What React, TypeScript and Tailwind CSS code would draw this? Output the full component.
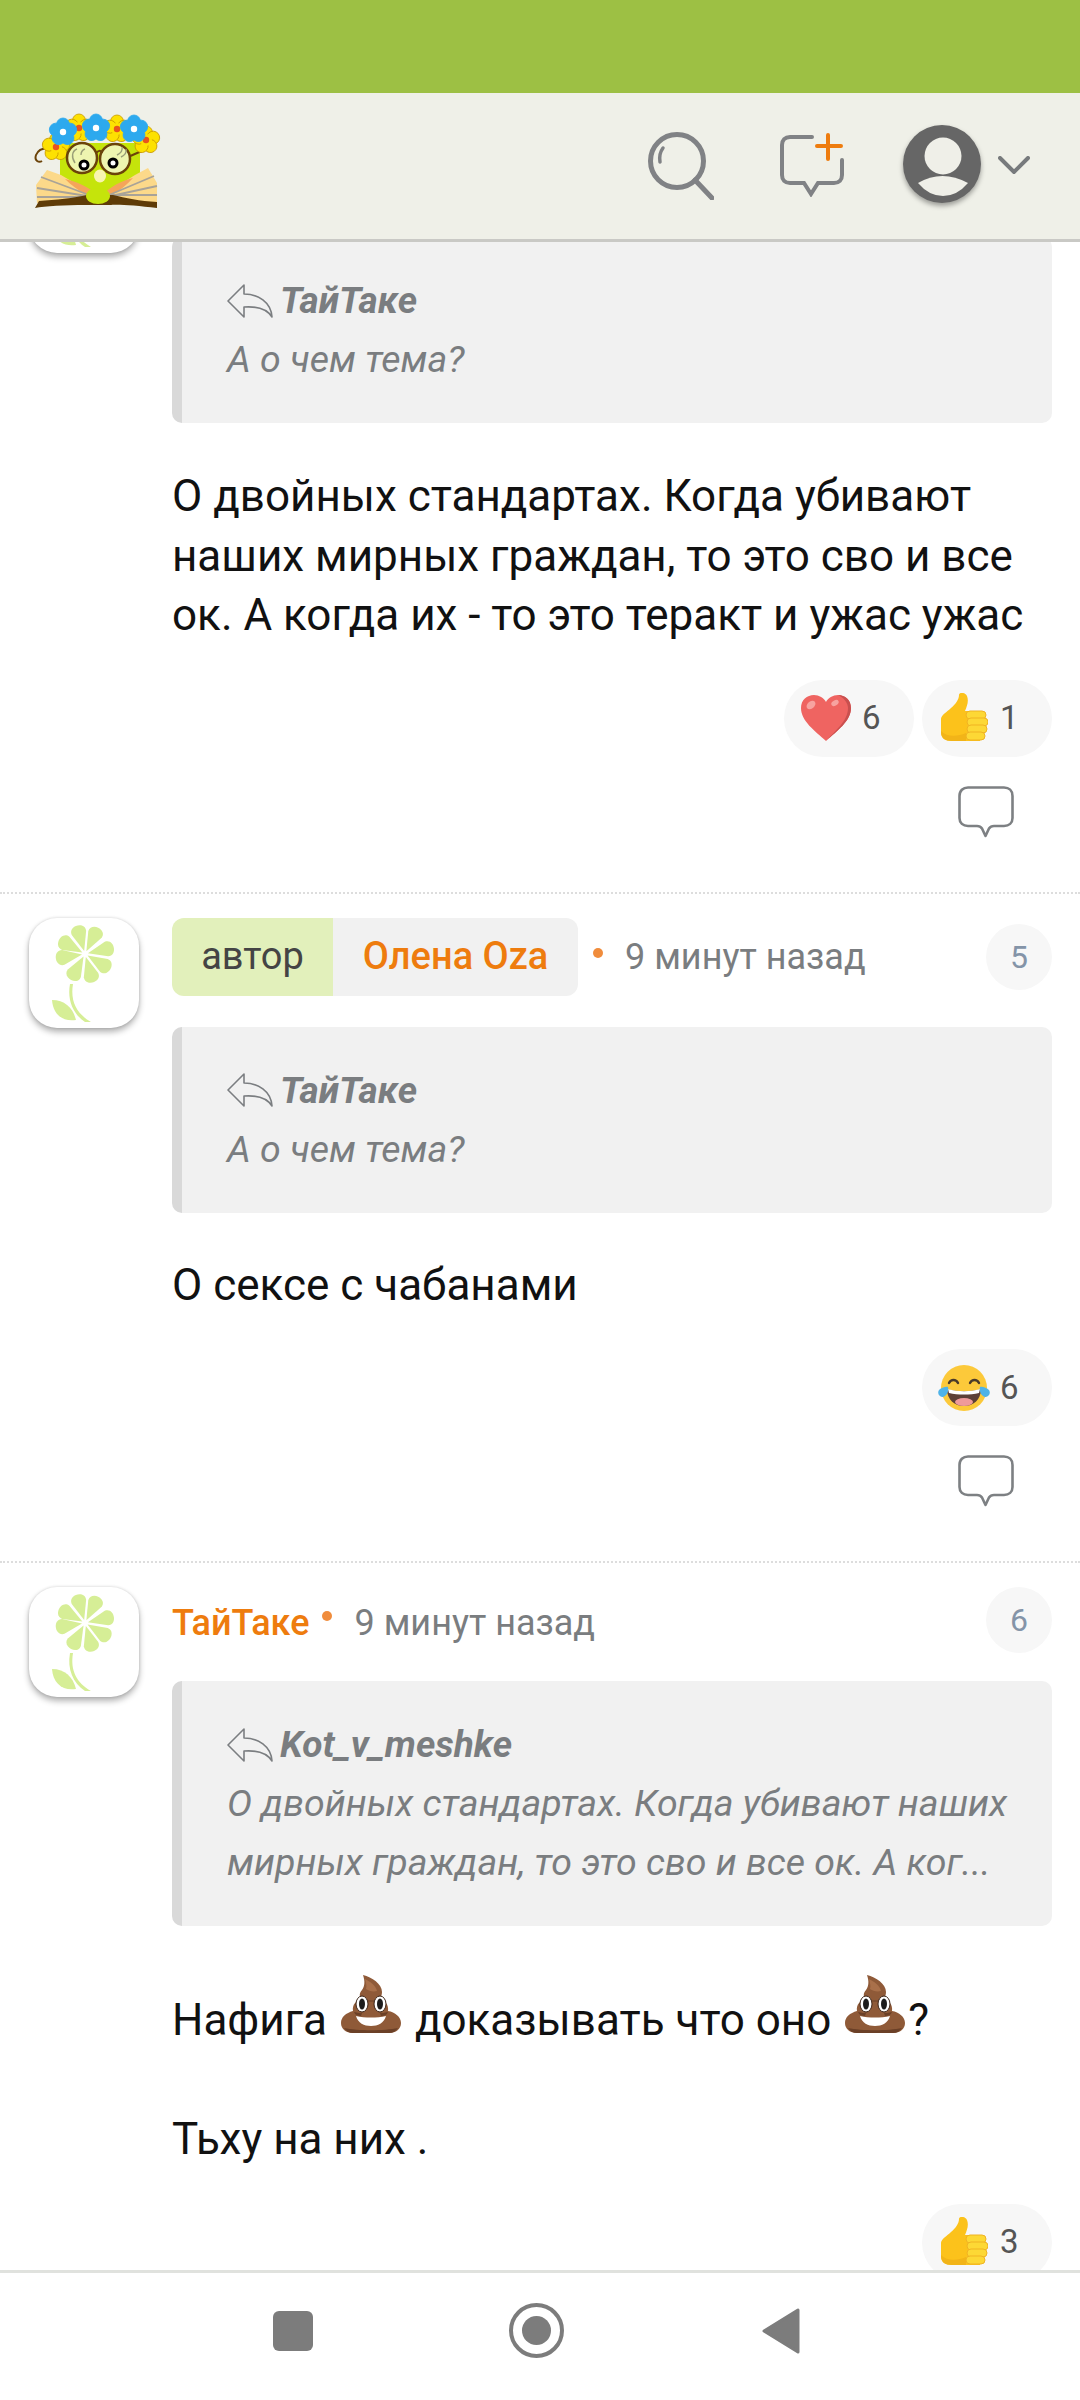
import React from 'react';

const Heart = () => (
  <svg viewBox="0 0 50 46" className="w-[50px] h-[46px]">
    <path d="M25 46C14 36 0 26 0 13 0 5 6 0 13 0c5 0 10 3 12 7 2-4 7-7 12-7 7 0 13 5 13 13 0 13-14 23-25 33z" fill="#ef6461" />
    <path d="M37 0c7 0 13 5 13 13 0 13-14 23-25 33 9-10 22-20 22-33 0-5-4-10-10-13z" fill="#c9504f" />
    <ellipse cx="10" cy="10" rx="5" ry="3.500" transform="rotate(-40 10 10)" fill="#f7a3a0" />
    <ellipse cx="34" cy="8" rx="4" ry="2.500" transform="rotate(-30 34 8)" fill="#f7a3a0" />
  </svg>
);

const Thumb = () => (
  <svg viewBox="0 0 48 50" className="w-[48px] h-[50px]">
    <path d="M1 26c0-4 6-7 10-11 5-4 8-9 8-13 0-3 6-3 8 1 2 5 0 10-2 15h15v30H12C5 48 1 45 1 40z" fill="#fcc21b" />
    <path d="M1 38c6 6 16 6 25 2v8H12C5 48 1 45 1 38z" fill="#f2b418" />
    <rect x="26" y="18" width="20" height="8" rx="4" fill="#fdd835" stroke="#f0b323" />
    <rect x="27" y="25" width="21" height="8" rx="4" fill="#fdd835" stroke="#f0b323" />
    <rect x="27" y="32" width="20" height="8" rx="4" fill="#fdd835" stroke="#f0b323" />
    <rect x="26" y="39" width="19" height="8" rx="4" fill="#fdd835" stroke="#f0b323" />
  </svg>
);

const Joy = () => (
  <svg viewBox="0 0 52 46" className="w-[52px] h-[46px]">
    <circle cx="26" cy="23" r="23" fill="#fcc93a" />
    <path d="M11 18c2-4 7-4 9 0M32 18c2-4 7-4 9 0" fill="none" stroke="#4a3a2a" strokeWidth="2.400" strokeLinecap="round" />
    <path d="M9 24c10 3 24 3 34 0 0 11-8 17-17 17S9 35 9 24z" fill="#5d4037" />
    <path d="M10 24c10 3 22 3 32 0l-1 4c-9 2-21 2-30 0z" fill="#fff" />
    <ellipse cx="26" cy="37" rx="9" ry="4" fill="#ef9a9a" />
    <path d="M1 25c2-2 7-4 9-3 1 4-1 9-5 10-4 0-6-4-4-7zM51 25c-2-2-7-4-9-3-1 4 1 9 5 10 4 0 6-4 4-7z" fill="#4fb3e8" />
  </svg>
);

const Poop = () => (
  <svg viewBox="0 0 60 58" className="inline-block w-[60px] h-[60px] -my-[26px] mx-[3px] align-[27px]">
    <path d="M22 0c9 2 19 9 19 17 0 3-1 5-3 7 6 1 10 6 9 12 7 1 13 6 13 12 0 6-5 10-12 10H12C5 58 0 54 0 48c0-6 5-10 12-12-1-6 3-11 9-12-3-2-3-6 0-9 3-4 3-9 1-15z" fill="#8f5a38" />
    <path d="M3 53c14 3 40 3 54 0-2 3-5 5-9 5H12c-4 0-7-2-9-5zM13 37c4 1 6 1 8 1l-1 3c-3 0-6-1-7-4zM47 37c-4 1-6 1-8 1l1 3c3 0 6-1 7-4zM21 24c6 2 12 2 17 0l-2 2c-5 1-10 1-15-2z" fill="#6b4027" />
    <path d="M24 4c6 3 11 7 12 12-4 1-8 0-11-2 1-3 0-6-1-10z" fill="#a9704a" />
    <ellipse cx="21" cy="29" rx="6" ry="8" fill="#fff" stroke="#3b2417" />
    <ellipse cx="39" cy="29" rx="6" ry="8" fill="#fff" stroke="#3b2417" />
    <ellipse cx="21" cy="29" rx="3" ry="5.500" fill="#1c1c1c" />
    <ellipse cx="39" cy="29" rx="3" ry="5.500" fill="#1c1c1c" />
    <path d="M15 41c9 2 21 2 30 0-2 7-8 10-15 10s-13-3-15-10z" fill="#fff" />
  </svg>
);

const Flower = () => (
  <svg viewBox="0 0 110 110" className="w-[110px] h-[110px]">
    {[-16, 27, 77, 121, 164, 209, 261, 299].map((a) => (
      <path key={a} d="M0 -3L-7.500 -22C-9 -32 9 -32 7.500 -22z" transform={`translate(56 36) rotate(${a})`} fill="#d6ee96" />
    ))}
    <path d="M44 66C41 84 48 96 62 104L56 104C44 96 38 82 41 66z" fill="#d6ee96" />
    <path d="M23 82C36 82 44 90 47 102 33 104 24 96 23 82z" fill="#d6ee96" />
  </svg>
);

const WreathFlower = ({ x, y, color, core, edge }: { x: number; y: number; color: string; core: string; edge: string }) => (
  <g transform={`translate(${x} ${y})`}>
    {[0, 72, 144, 216, 288].map((a) => (
      <circle key={a} cx="0" cy="-7.500" r="6.500" transform={`rotate(${a})`} fill={color} stroke={edge} strokeWidth="0.800" />
    ))}
    <circle r="6" fill={color} />
    <circle r="3.200" fill={core} />
  </g>
);

const Logo = () => (
  <svg viewBox="0 0 145 110" className="w-[145px] h-[110px] -mt-[12px]">
    <path d="M35 38h80v42l-30 12H62L35 80z" fill="#c5e40b" />
    <path d="M42 50C30 42 15 40 11 50 9 56 14 58 17 56" fill="none" stroke="#6b4309" strokeWidth="2" />
    <path d="M103 52l16-7" stroke="#6b4309" strokeWidth="2" />
    <WreathFlower x={31} y={42} color="#fde101" core="#e8531d" edge="#c99a00" />
    <WreathFlower x={54} y={23} color="#fde101" core="#e8531d" edge="#c99a00" />
    <WreathFlower x={92} y={24} color="#fde101" core="#e8531d" edge="#c99a00" />
    <WreathFlower x={121} y={35} color="#fde101" core="#e8531d" edge="#c99a00" />
    <WreathFlower x={38} y={27} color="#2da9ee" core="#ffffff" edge="#2da9ee" />
    <WreathFlower x={71} y={23} color="#2da9ee" core="#ffffff" edge="#2da9ee" />
    <WreathFlower x={109} y={24} color="#2da9ee" core="#ffffff" edge="#2da9ee" />
    <circle cx="57" cy="53" r="15" fill="#eef5b0" stroke="#6b4309" strokeWidth="2.500" />
    <circle cx="90" cy="54" r="15" fill="#eef5b0" stroke="#6b4309" strokeWidth="2.500" />
    <path d="M71 48c3-3 5-3 6 0" fill="none" stroke="#6b4309" strokeWidth="2" />
    <path d="M50 58c-4-6-3-12 2-14M56 50c0-3 1-5 4-6M92 50c4-2 6-4 5-8M96 52c4-2 6-4 5-8" fill="none" stroke="#9a9f78" strokeWidth="1.400" />
    <circle cx="59" cy="60" r="5.500" fill="#000" />
    <circle cx="88" cy="58" r="5.500" fill="#000" />
    <circle cx="59" cy="60" r="2.500" fill="#fff" />
    <circle cx="88" cy="58" r="2.500" fill="#fff" />
    <ellipse cx="75" cy="71" rx="6" ry="6.500" fill="#f8f4b0" />
    <path d="M22 65L36 70 70 90V98H12L11 80z" fill="#fcd98a" />
    <path d="M123 63L110 70 78 90V98H132V78z" fill="#fcd98a" />
    <path d="M40 74c10 2 24 8 33 16H62c-8-4-16-10-22-16zM108 73c-10 2-24 9-30 17h8c8-4 16-10 22-17z" fill="#f5a55a" />
    <path d="M16 72l48 18M12 83l50 8M12 92h50M129 71L84 90M132 81l-46 10M132 90H86" stroke="#a9a398" strokeWidth="1.800" />
    <path d="M10 103L14 96C30 95 50 93 62 90H88C100 93 115 96 132 97V103C110 100 90 99 85 100H60C40 100 20 101 10 103z" fill="#5e3b07" />
    <ellipse cx="73" cy="91" rx="12" ry="8" fill="#c5e40b" />
  </svg>
);

const SearchIcon = () => (
  <svg viewBox="0 0 66 68" className="w-[66px] h-[68px]" fill="none" stroke="#808285" strokeLinecap="round">
    <circle cx="29" cy="29" r="26.500" strokeWidth="5" />
    <path d="M47 48l17 18" strokeWidth="5" />
    <path d="M12 30c-1-6 0-10 3-14" strokeWidth="3.500" />
  </svg>
);

const NewCommentIcon = () => (
  <svg viewBox="0 0 64 64" className="w-[64px] h-[64px] -mt-[3px]" fill="none" strokeLinecap="round">
    <path d="M32 4H10C5 4 2 7 2 12v30c0 5 3 8 8 8h14l7 11 7-11h16c5 0 8-3 8-8V27" stroke="#808285" strokeWidth="4" />
    <path d="M48 2v24M37 13h24" stroke="#ee7c0e" strokeWidth="4" />
  </svg>
);

const UserAvatar = () => (
  <div className="w-[78px] h-[78px] -mt-[5px] rounded-full bg-[#666666] shadow-[0_3px_5px_rgba(0,0,0,0.35)] overflow-hidden">
    <svg viewBox="0 0 78 78" className="w-full h-full">
      <circle cx="40" cy="31" r="18.500" fill="#efefe8" />
      <path d="M15 58Q39 44 65 58 54 71 40 71 26 71 15 58z" fill="#efefe8" />
    </svg>
  </div>
);

const ReplyArrow = () => (
  <svg viewBox="0 0 46 34" className="w-[46px] h-[34px] shrink-0" fill="none" stroke="#7b7e81" strokeWidth="1.600" strokeLinejoin="round">
    <path d="M1 17L17 1v9c14 0 27 8 28 23-5-8-14-11-28-10v10z" />
  </svg>
);

const Bubble = () => (
  <svg viewBox="0 0 56 52" className="w-[56px] h-[52px]" fill="none" stroke="#7d8083" strokeWidth="2.600" strokeLinejoin="round">
    <path d="M10 1.500h36c5 0 8.500 3 8.500 8.500v22c0 5-3.500 8-8.500 8H36c-3 0-4 1-5 2.500L27.500 50 24 42.500C23 41 22 40 19 40H10c-5 0-8.500-3-8.500-8V10C1.500 4.500 5 1.500 10 1.500z" />
  </svg>
);

const Avatar = () => (
  <div className="w-[110px] h-[110px] shrink-0 rounded-[28px] bg-white shadow-[0_4px_6px_rgba(0,0,0,0.3),0_0_3px_rgba(0,0,0,0.15)]">
    <Flower />
  </div>
);

const Reaction = ({ icon, count }: { icon: React.ReactNode; count: number }) => (
  <div className="w-[130px] h-[77px] rounded-full bg-[#f7f7f7] flex items-center pl-[16px] gap-[10px] text-[33px] text-[#555555]">
    <div className="w-[52px] flex justify-center">{icon}</div>
    <span>{count}</span>
  </div>
);

const Quote = ({ author, lines }: { author: string; lines: string[] }) => (
  <div className="rounded-[10px] overflow-hidden bg-[#f1f1f1] border-l-[10px] border-[#d9d9d9] pl-[45px] pr-[20px] py-[34px] text-[37.500px] leading-[59px] italic text-[#7a7d80] whitespace-nowrap">
    <div className="flex items-center gap-[7px]">
      <ReplyArrow />
      <span className="font-bold text-[37px]">{author}</span>
    </div>
    {lines.map((l) => (
      <div key={l}>{l}</div>
    ))}
  </div>
);

const Meta = ({ time, num, badgeClass = '', dotClass = '-mt-[8px]' }: { time: string; num: number; badgeClass?: string; dotClass?: string }) => (
  <div className="flex items-center flex-1">
    <div className={`w-[10px] h-[10px] rounded-full bg-[#f08c3c] mr-[22px] ${dotClass}`} />
    <span className="text-[36px] text-[#7a7d80] flex-1">{time}</span>
    <div className={`w-[66px] h-[66px] rounded-full bg-[#f7f7f7] flex items-center justify-center text-[32px] text-[#8494a8] ${badgeClass}`}>{num}</div>
  </div>
);

const Comment = ({
  header,
  quote,
  body,
  reactions,
  bodyGap,
  showBubble = true,
}: {
  header: React.ReactNode;
  quote: React.ReactNode;
  body: React.ReactNode;
  reactions: React.ReactNode;
  bodyGap: string;
  showBubble?: boolean;
}) => (
  <div className="flex pl-[29px] pr-[28px] pt-[24px] pb-[54px] gap-[33px] border-b-2 border-dotted border-[#dddddd]">
    <Avatar />
    <div className="flex-1 min-w-0">
      {header}
      {quote}
      <div className={`${bodyGap} text-[44px] leading-[59.500px] text-[#111111] whitespace-nowrap`}>{body}</div>
      <div className="flex justify-end gap-[8px] mt-[34px]">{reactions}</div>
      {showBubble && (
        <div className="flex justify-end pr-[38px] mt-[29px]">
          <Bubble />
        </div>
      )}
    </div>
  </div>
);

const App: React.FC = () => {
  return (
    <div className="w-[1080px] h-[2400px] flex flex-col bg-white [font-family:Roboto,sans-serif]">
      <div className="h-[93px] bg-[#9dc044]" />

      <header className="h-[149px] shrink-0 bg-[#eff0e8] border-b-[3px] border-[#c9c9c5] flex items-center pl-[25px] pr-[50px]">
        <Logo />
        <div className="ml-auto flex items-center">
          <SearchIcon />
          <div className="ml-[66px]">
            <NewCommentIcon />
          </div>
          <div className="ml-[59px]">
            <UserAvatar />
          </div>
          <svg viewBox="0 0 32 18" className="w-[32px] h-[18px] ml-[17px] -mt-[3px]" fill="none" stroke="#777a7c" strokeWidth="4" strokeLinecap="round">
            <path d="M2 2l14 14L30 2" />
          </svg>
        </div>
      </header>

      <main className="flex-1 overflow-hidden">
        <div className="-mt-[123px]">
          <Comment
            header={<div className="h-[94px]" />}
            quote={<Quote author="ТайТаке" lines={['А о чем тема?']} />}
            bodyGap="mt-[44px]"
            body={
              <>
                О двойных стандартах. Когда убивают
                <br />
                наших мирных граждан, то это сво и все
                <br />
                ок. А когда их - то это теракт и ужас ужас
              </>
            }
            reactions={
              <>
                <Reaction icon={<Heart />} count={6} />
                <Reaction icon={<Thumb />} count={1} />
              </>
            }
          />

          <Comment
            header={
              <div className="flex items-center h-[78px] mb-[31px]">
                <div className="flex h-full rounded-[12px] overflow-hidden text-[38px] mr-[15px]">
                  <div className="w-[161px] bg-[#e2f0bb] text-[#444444] flex items-center justify-center">автор</div>
                  <div className="w-[245px] bg-[#f1f1f1] text-[#ee7c0e] font-medium flex items-center justify-center">Олена Oza</div>
                </div>
                <Meta time="9 минут назад" num={5} />
              </div>
            }
            quote={<Quote author="ТайТаке" lines={['А о чем тема?']} />}
            bodyGap="mt-[43px]"
            body="О сексе с чабанами"
            reactions={<Reaction icon={<Joy />} count={6} />}
          />

          <Comment
            header={
              <div className="h-[94px] flex items-start pt-[6px]">
                <div className="flex items-center flex-1">
                  <span className="text-[36px] font-medium text-[#ee7c0e] mr-[13px]">ТайТаке</span>
                  <Meta time="9 минут назад" num={6} badgeClass="-mt-[6px]" dotClass="-mt-[14px]" />
                </div>
              </div>
            }
            quote={
              <Quote
                author="Kot_v_meshke"
                lines={['О двойных стандартах. Когда убивают наших', 'мирных граждан, то это сво и все ок. А ког...']}
              />
            }
            bodyGap="mt-[65px]"
            body={
              <>
                Нафига <Poop /> доказывать что оно <Poop />?
                <br />
                <br />
                Тьху на них .
              </>
            }
            reactions={<Reaction icon={<Thumb />} count={3} />}
            showBubble={false}
          />
        </div>
      </main>

      <nav className="h-[130px] shrink-0 bg-white border-t-[3px] border-[#e0e2de] flex items-center pl-[273px] pb-[12px]">
        <div className="w-[40px] h-[40px] rounded-[6px] bg-[#7c7c7c]" />
        <div className="ml-[196px] w-[55px] h-[55px] rounded-full border-[4px] border-[#7c7c7c] flex items-center justify-center">
          <div className="w-[29px] h-[29px] rounded-full bg-[#7c7c7c]" />
        </div>
        <svg viewBox="0 0 38 46" className="w-[38px] h-[46px] ml-[198px]">
          <path d="M36 2v42L2 23z" fill="#7c7c7c" stroke="#7c7c7c" strokeWidth="3" strokeLinejoin="round" />
        </svg>
      </nav>
    </div>
  );
};

export default App;
